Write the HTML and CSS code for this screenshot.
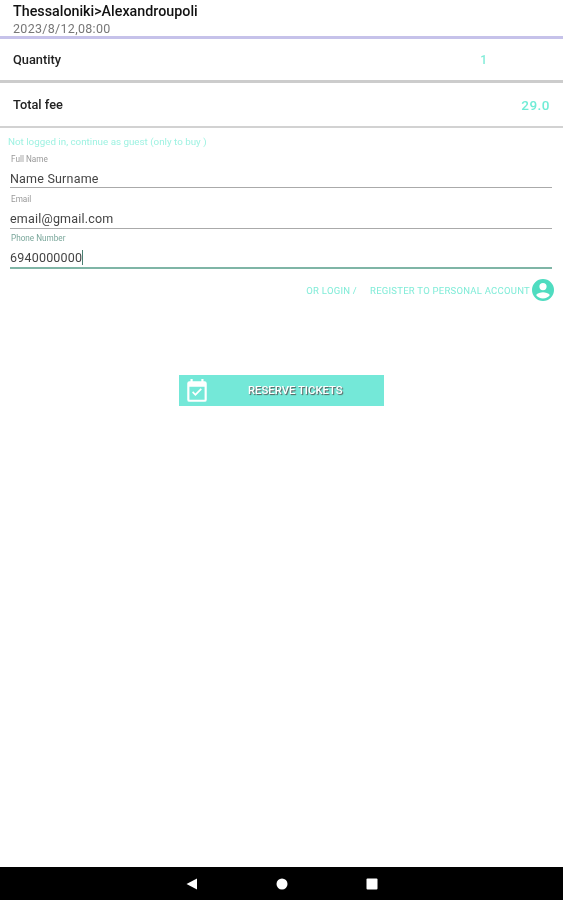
FILE: index.html
```html
<!DOCTYPE html>
<html lang="en">
<head>
  <meta charset="UTF-8">
  <meta name="viewport" content="width=device-width, initial-scale=1.0">
  <title>Reserve Tickets</title>
  <link rel="stylesheet" href="styles.css">
</head>
<body>
  <div class="screen">
    <div class="trip">
      <div class="route">Thessaloniki&gt;Alexandroupoli</div>
      <div class="date">2023/8/12,08:00</div>
    </div>
    <div class="row row-quantity">
      <span class="row-label">Quantity</span>
      <span class="quantity-value">1</span>
    </div>
    <div class="row row-fee">
      <span class="row-label">Total fee</span>
      <span class="fee-value">29.0</span>
    </div>
    <p class="guest-note">Not logged in, continue as guest (only to buy )</p>
    <div class="form">
      <div class="field">
        <label class="field-label">Full Name</label>
        <div class="field-value">Name Surname</div>
      </div>
      <div class="field field-email">
        <label class="field-label">Email</label>
        <div class="field-value">email@gmail.com</div>
      </div>
      <div class="field field-active">
        <label class="field-label">Phone Number</label>
        <div class="field-value">6940000000<span class="caret"></span></div>
      </div>
    </div>
    <div class="account-links">
      <span class="or-login">OR LOGIN /</span>
      <span class="register">REGISTER TO PERSONAL ACCOUNT</span>
      <svg class="account-icon" viewBox="0 0 24 24" width="24" height="24">
        <path fill="#4fdcc0" d="M12 1a11 11 0 1 0 0 22 11 11 0 0 0 0-22zm0 4a3.6 3.6 0 1 1 0 7.2A3.6 3.6 0 0 1 12 5zm0 15.6c-2.9 0-5.4-1.4-6.9-3.6 1.3-1.7 4.6-2.7 6.9-2.7s5.6 1 6.9 2.7c-1.5 2.2-4 3.6-6.9 3.6z"/>
      </svg>
    </div>
    <div class="reserve-wrap">
      <button class="reserve">
        <svg class="reserve-icon" viewBox="0 0 24 24" width="26" height="26">
          <path fill="#fff" d="M19 3h-1V1h-2v2H8V1H6v2H5a2 2 0 0 0-2 2v15a2 2 0 0 0 2 2h14a2 2 0 0 0 2-2V5a2 2 0 0 0-2-2zm0 17H5V8h14v12zm-2.5-9.5-1.1-1.1-4.9 4.9-2-2-1.1 1.1 3.1 3.1 6-6z"/>
        </svg>
        <span class="reserve-text">RESERVE TICKETS</span>
      </button>
    </div>
    <div class="spacer"></div>
    <div class="nav-bar">
      <svg viewBox="0 0 12 12" width="12" height="12"><path fill="#fff" d="M11 0.5V11.5L0.5 6z"/></svg>
      <svg viewBox="0 0 12 12" width="12" height="12"><circle fill="#fff" cx="6" cy="6" r="5.5"/></svg>
      <svg viewBox="0 0 12 12" width="12" height="12"><rect fill="#fff" x="0.5" y="0.5" width="11" height="11" rx="1"/></svg>
    </div>
  </div>
</body>
</html>
```

FILE: styles.css
```css
body {
  margin: 0;
  font-family: Roboto, "Liberation Sans", sans-serif;
  background-color: #fff;
  color: #111;
}
/* the reference is an upscaled capture, so everything is a bit soft */
.screen {
  display: flex;
  flex-direction: column;
  width: 563px;
  height: 900px;
  overflow: hidden;
  filter: blur(0.4px);
}
.trip {
  height: 39px;
  padding: 3px 0 0 13px;
  box-sizing: border-box;
  border-bottom: 3px solid #c6c2ea;
}
.route {
  font-size: 14.3px;
  font-weight: 500;
  line-height: 16px;
}
.date {
  font-size: 12.5px;
  line-height: 19px;
  letter-spacing: 0.3px;
  color: #777;
}
.row {
  display: flex;
  align-items: center;
  justify-content: space-between;
  box-sizing: border-box;
}
.row-quantity {
  height: 44px;
  padding: 0 76px 0 13px;
  border-bottom: 3px solid #ccc;
}
.row-fee {
  height: 45px;
  padding: 0 13px;
  border-bottom: 2px solid #d2d2d2;
}
.row-label {
  font-size: 12.8px;
  font-weight: 500;
  color: #222;
}
.quantity-value {
  font-size: 12px;
  font-weight: 500;
  color: #80ecd8;
}
.fee-value {
  font-size: 13.5px;
  font-weight: 500;
  letter-spacing: 0.5px;
  color: #70ecd6;
}
.guest-note {
  margin: 8px 0 0 8px;
  font-size: 9.8px;
  line-height: 11px;
  color: #9ff2e2;
}
.form {
  display: flex;
  flex-direction: column;
  margin: 1px 11px 0 10px;
}
.field {
  height: 40px;
  padding-top: 6px;
  box-sizing: border-box;
  border-bottom: 1px solid #aaa;
}
.field-email {
  height: 41px;
}
.field-label {
  display: block;
  padding: 0 0 0 1px;
  font-size: 8.2px;
  line-height: 10px;
  color: #999;
}
.field-value {
  display: flex;
  align-items: center;
  height: 18px;
  margin-top: 5px;
  font-size: 12.5px;
  letter-spacing: 0.2px;
  color: #444;
}
.field-active {
  padding-top: 4px;
  border-bottom: 2px solid #7fb5a6;
}
.field-active .field-label {
  color: #7aa79b;
}
.caret {
  width: 1px;
  height: 15px;
  background-color: #4a7f72;
}
.account-links {
  display: flex;
  align-items: center;
  height: 24px;
  margin-top: 9px;
  padding-right: 8px;
  justify-content: flex-end;
  font-size: 9.5px;
  letter-spacing: 0.25px;
  color: #80ecd8;
}
.or-login {
  margin-right: 13px;
}
.account-icon {
  margin-left: 1px;
}
.reserve-wrap {
  display: flex;
  margin-top: 73px;
  padding-left: 179px;
}
.reserve {
  display: flex;
  align-items: center;
  width: 205px;
  height: 31px;
  padding: 0 0 0 5px;
  border: 0;
  background-color: #74e8d8;
  font-family: inherit;
}
.reserve-icon {
  flex: none;
}
.reserve-text {
  margin-left: 38px;
  font-size: 11.3px;
  font-weight: 500;
  color: #fff;
  text-shadow: 1px 1px 1px #555;
}
.spacer {
  flex: 1;
}
.nav-bar {
  display: flex;
  align-items: center;
  justify-content: center;
  gap: 78px;
  height: 33px;
  flex: none;
  background-color: #000;
}
```
